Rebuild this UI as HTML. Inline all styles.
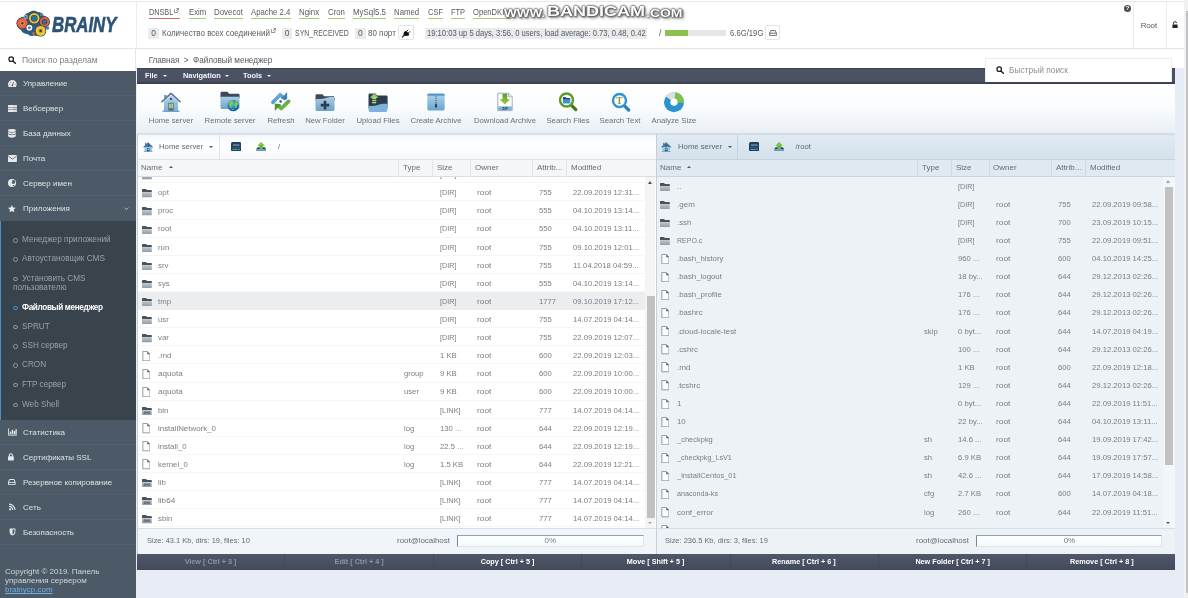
<!DOCTYPE html>
<html lang="ru">
<head>
<meta charset="utf-8">
<title>BrainyCP - Файловый менеджер</title>
<style>
*{box-sizing:border-box;margin:0;padding:0}
html,body{width:1188px;height:598px;overflow:hidden}
body{position:relative;background:#e8edf5;font-family:"Liberation Sans",sans-serif;font-size:8px;color:#5d646b}
#root{position:absolute;left:0;top:0;width:1188px;height:598px;will-change:transform}
.abs{position:absolute}
i{font-style:normal}
/* ---------- header ---------- */
#hdr{position:absolute;left:0;top:0;width:1184px;height:48.800px;background:#fff;border-bottom:1px solid #e2e4e7}
#hdr:before{content:"";position:absolute;left:0;top:1px;width:100%;height:1px;background:#e6e7e9}
#hdr .vline{position:absolute;top:2px;width:1px;height:46px;background:#eaecee}
#logo{position:absolute;left:0;top:0;width:136px;height:49px}
.svc{position:absolute;top:8px;height:10.700px;font-size:8.600px;color:#555b62;line-height:9px;border-bottom:1.200px solid #a3d070;white-space:nowrap}
.svc i,.st i{display:inline-block;transform-origin:0 50%}
.svc.red{border-bottom-color:#d2706c}
.st{position:absolute;top:28.300px;height:11px;line-height:11px;font-size:8.600px;color:#555b62;white-space:nowrap}
.bdg{position:absolute;top:28.200px;background:#e9ebed;width:10.600px;height:10.600px;line-height:10.800px;font-size:8.400px;text-align:center;color:#555}
/* ---------- sidebar ---------- */
#side{position:absolute;left:0;top:49px;width:136px;height:549px;background:#4b5a66}
#ssearch{position:absolute;left:0;top:0;width:136px;height:22px;background:#fff;border-right:1px solid #e4e6e8}
#ssearch span{position:absolute;left:22px;top:6px;font-size:8.5px;line-height:10px;color:#7b8187}
.mi{position:absolute;left:0;width:136px;height:25px;border-bottom:1px solid #536170;color:#dde1e5;font-size:8px;line-height:25px;padding-left:23px;white-space:nowrap}
.mi svg{position:absolute;left:8px;top:8px;width:9px;height:8px}
#sub{position:absolute;left:0;top:171.500px;width:136px;height:199.100px;background:#38434c;border-left:1.5px solid #4a90c8}
.si{position:absolute;left:22px;font-size:8.200px;line-height:9.700px;color:#98a2a9;white-space:nowrap}
.si:before{content:"";position:absolute;left:-9px;top:3px;width:2.5px;height:2.5px;border:1px solid #8e989f;border-radius:50%}
.si.act{color:#fff;font-weight:bold;letter-spacing:-.35px}
.si.act:before{border-color:#4a90c8}
#foot{position:absolute;left:5px;top:517.500px;font-size:8px;line-height:9.400px;color:#d0d5da}
#foot u{color:#6fb1e6}
/* ---------- main ---------- */
#crumb{position:absolute;left:136px;top:49px;width:1048px;height:19px;background:#fff}
#crumb span{position:absolute;left:12.700px;top:7.100px;font-size:8.200px;letter-spacing:-.06px;line-height:10px;color:#555b61;white-space:nowrap}
#mbar{position:absolute;left:136.800px;top:68px;width:1038.500px;height:15.800px;background:linear-gradient(#3a4150,#4a5263 12%,#4a5162 80%,#363c4a);color:#f4f6f9;font-size:7.700px;line-height:15.600px;font-weight:bold;overflow:hidden}
#mbar span{position:absolute;top:0;white-space:nowrap}
#mbar span b{display:inline-block;transform:scaleX(.96);transform-origin:0 50%}
.car{display:inline-block;width:0;height:0;border-left:2.100px solid transparent;border-right:2.100px solid transparent;border-top:2.600px solid currentColor;vertical-align:middle;margin-left:3px}
#tbar{position:absolute;left:137px;top:83.800px;width:1037.600px;height:50.500px;background:linear-gradient(#ffffff 0%,#fbfcfd 45%,#e9eff5 100%);border-bottom:1px solid #d5dde5}
.tb{position:absolute;top:0;height:50px;text-align:center;white-space:nowrap}
.tb svg{position:absolute;left:50%;top:7.200px;width:22px;height:22px;margin-left:-11px}
.tb span{position:absolute;left:50%;top:32.500px;font-size:7.700px;line-height:10px;color:#686f77;transform:translateX(-50%) scaleX(1.010)}
#qs{position:absolute;left:985px;top:58.200px;width:186.600px;height:23.800px;background:#fff;border:1px solid #ededed;border-bottom:none}
#qs span{position:absolute;left:23px;top:6.300px;font-size:8.400px;line-height:10px;color:#8a9096}
/* panels */
.pnl{position:absolute;top:134.300px;height:419.700px;overflow:hidden}
#pl{left:137px;width:518.500px;background:#fff}
#pr{left:655.500px;width:519.100px;background:#edf2f7}
.lb{position:absolute;left:0;top:0;width:1px;height:100%;background:#c9ced3;z-index:5}
#pr .lb{background:#c5d0da}
.pbar{position:absolute;left:0;top:0;width:100%;height:25.700px;background:linear-gradient(#f4f7fa,#ffffff 40%,#f6f8fa);border-top:1px solid #dbe2e9;border-bottom:1px solid #dde2e7}
#pr .pbar{background:linear-gradient(#e1eaf2,#d4e1eb);border-top-color:#d0dbe4;border-bottom-color:#c6d3dd}
.pbar .t{position:absolute;top:7.200px;font-size:7.700px;line-height:10px;color:#5f6871;white-space:nowrap}
.pbar .t i{display:inline-block;transform:scaleX(1.005);transform-origin:0 50%}
.pbar .sep{position:absolute;left:81.500px;top:0;width:1px;height:25px;background:#dfe5ea}
#pr .pbar .sep{background:#c6d3de}
.chdr{position:absolute;left:0;top:25.700px;width:100%;height:17px;background:#f4f6f8;border-bottom:1px solid #d9dee3}
#pr .chdr{background:#dfe9f1;border-bottom-color:#c9d4dd}
.chdr span{position:absolute;top:3.500px;font-size:7.700px;line-height:10px;color:#646c75;white-space:nowrap}
.chdr span i{display:inline-block;transform:scaleX(1.040);transform-origin:0 50%}
.chdr b{position:absolute;top:0;width:1px;height:17px;background:#e3e6ea}
#pr .chdr b{background:#d0dbe4}
.list{position:absolute;left:0;top:42.700px;width:507.800px;height:351px;overflow:hidden}
#pr .list{width:508px}
.row{position:absolute;left:0;width:100%;height:18.110px;border-bottom:1px solid #f5f6f7}
#pr .row{border-bottom-color:transparent}
.row.sel{background:#ebedef;border-bottom-color:#ebedef}
.ic{position:absolute;left:4.800px;top:6px;width:9.800px;height:8.300px}
.ic.f{left:5.100px;top:4.500px;width:8.400px;height:10.300px}
.c{position:absolute;top:4.900px;font-size:7.800px;line-height:10px;color:#777e86;white-space:nowrap}
.c i{display:inline-block;transform:scaleX(.985);transform-origin:0 50%}
.c.n i{transform:scaleX(1.010)}
.sb{position:absolute;top:42.700px;width:11px;height:351px;background:#f4f4f4}
.sb .th{position:absolute;left:2.300px;width:7.600px;background:#c1c1c1}
.sbar{position:absolute;left:0;top:393.700px;width:100%;height:26px;background:#f1f4f8;border-top:1px solid #d9dee4}
#pr .sbar{background:#edf2f7}
.sbar span{position:absolute;top:6.900px;font-size:7.700px;line-height:10px;color:#646c75;white-space:nowrap}
.sbar span i{display:inline-block;transform:scaleX(.97);transform-origin:0 50%}
.prog{position:absolute;top:6.300px;height:11.300px;background:#fff;border:1px solid #dbe6ee;border-top-color:#86a5ba;border-left:1.500px solid #6c8aa0;background:linear-gradient(#fff,#f4fafc);font-size:8px;line-height:9.500px;text-align:center;color:#777}
#bbar{position:absolute;left:137px;top:554px;width:1037.600px;height:15.500px;background:linear-gradient(#4f576a,#434a5a)}
#bbar span{position:absolute;top:0;width:148.4px;height:15.5px;text-align:center;color:#fff;font-weight:bold;font-size:7.700px;line-height:15.800px;border-right:1px solid #424a59;white-space:nowrap}
#bbar span.dis{color:#8d94a2}
#bbar span i{display:inline-block;transform:scaleX(.94)}
#pscroll{position:absolute;left:1184.300px;top:0;width:3.700px;height:598px;background:#f1f1f2}
#pscroll:after{content:"";position:absolute;left:1.700px;top:10.500px;width:2px;height:582.300px;background:#c1c1c3}
#wm{position:absolute;left:504.300px;top:2.500px;width:190px;height:20px;font-weight:bold;color:#fff;white-space:nowrap;text-shadow:0 0 1.500px #444,0 0 1.500px #444,0 0 2px #555,.8px .8px 2px #666,1.500px 1.500px 3px rgba(0,0,0,.4)}
#wm span{position:absolute;line-height:16px;transform-origin:0 50%}
</style>
</head>
<body>
<div id="root">

<!-- header -->
<div id="hdr">
  <div class="vline" style="left:135.5px"></div>
  <div class="vline" style="left:1133px"></div>
  <div class="vline" style="left:1166px"></div>
  <svg id="logo" viewBox="0 0 136 49">
    <g>
      <path d="M17 24c0-4 3-7 6.500-7 1-2.500 3-4 5.500-4.500 2-2 6-2.500 8.500-.5 3 0 5.500 1.500 6.500 4 3 .5 5.500 3 5.500 6 0 2.500-1.500 4.500-3.500 5.500 0 3-2 5.500-5 6-1.500 2-4.500 3-7 2-2 1-5 .5-6.500-1.500-3 0-5.500-1.500-6.500-4C18.500 29 17 26.500 17 24z" fill="#2b5d84"/>
      <circle cx="22.400" cy="23.300" r="6" fill="#3a3f45"/><circle cx="22.400" cy="23.300" r="5.300" fill="#e8633a"/><circle cx="22.400" cy="23.300" r="2.400" fill="#f08a5e"/><circle cx="22.400" cy="23.300" r="1.200" fill="#3a3f45"/>
      <circle cx="34.200" cy="18.300" r="6" fill="#3a3f45"/><circle cx="34.200" cy="18.300" r="5.300" fill="#e9c83a"/><circle cx="34.200" cy="18.300" r="3.400" fill="#3a3f45"/><circle cx="34.200" cy="18.300" r="2.800" fill="#2f6fa3"/>
      <circle cx="44.500" cy="21.800" r="5.500" fill="#3a3f45"/><circle cx="44.500" cy="21.800" r="4.800" fill="#e8633a"/><circle cx="44.500" cy="21.800" r="2.800" fill="#3a3f45"/><circle cx="44.500" cy="21.800" r="2.200" fill="#2f6fa3"/>
      <circle cx="40.600" cy="30.900" r="5.700" fill="#3a3f45"/><circle cx="40.600" cy="30.900" r="5" fill="#e9c83a"/><circle cx="40.600" cy="30.900" r="2.300" fill="#d4ad20"/><circle cx="40.600" cy="30.900" r="1.300" fill="#3a3f45"/>
      <circle cx="29.400" cy="27.700" r="3.600" fill="#3a3f45"/><circle cx="29.400" cy="27.700" r="3" fill="#f4f6f8"/><circle cx="29.400" cy="27.700" r="1.300" fill="#2f6fa3"/>
      <circle cx="25.700" cy="17" r="2.200" fill="#8fb3cc"/><circle cx="25.700" cy="17" r="1" fill="#2b5d84"/>
      <circle cx="41.500" cy="14.800" r="1.500" fill="#3f8cc0"/><circle cx="47.500" cy="28" r="1.800" fill="#3f8cc0"/><circle cx="33.500" cy="33.500" r="1.300" fill="#e8633a"/>
    </g>
    <text x="52" y="32.400" font-family="Liberation Sans, sans-serif" font-size="22" font-weight="bold" font-style="italic" fill="#2d5378" stroke="#2d5378" stroke-width=".6" textLength="64.500" lengthAdjust="spacingAndGlyphs">BRAINY</text>
  </svg>

<span class="svc red" style="left:148.7px;width:31.1px"><i style="transform:scaleX(0.847)">DNSBL</i><span style="position:absolute;left:24.6px;top:-1px"><svg viewBox="0 0 6 6" style="display:inline-block;width:5px;height:5px;vertical-align:top;margin-left:1px;margin-top:1px"><path d="M.5 1.500v4h4V3.500M3 .5h2.500V3M5.300 .7L2.500 3.500" fill="none" stroke="#50565c" stroke-width=".8"/></svg></span></span>
<span class="svc" style="left:188.6px;width:17.2px"><i style="transform:scaleX(0.900)">Exim</i></span>
<span class="svc" style="left:214px;width:28.9px"><i style="transform:scaleX(0.916)">Dovecot</i></span>
<span class="svc" style="left:251.2px;width:39.4px"><i style="transform:scaleX(0.906)">Apache 2.4</i></span>
<span class="svc" style="left:298.7px;width:20.2px"><i style="transform:scaleX(0.919)">Nginx</i></span>
<span class="svc" style="left:327.7px;width:16.9px"><i style="transform:scaleX(0.907)">Cron</i></span>
<span class="svc" style="left:352.7px;width:32.9px"><i style="transform:scaleX(0.918)">MySql5.5</i></span>
<span class="svc" style="left:393.9px;width:25.2px"><i style="transform:scaleX(0.909)">Named</i></span>
<span class="svc" style="left:428px;width:15.0px"><i style="transform:scaleX(0.872)">CSF</i></span>
<span class="svc" style="left:450.5px;width:14.1px"><i style="transform:scaleX(0.868)">FTP</i></span>
<span class="svc" style="left:473.4px;width:37.6px"><i style="transform:scaleX(0.884)">OpenDKIM</i></span>
<span class="bdg" style="left:148.200px">0</span>
<span class="st" style="left:161.6px"><i style="transform:scaleX(0.930)">Количество всех соединений</i><span style="position:absolute;left:108.3px;top:-1px"><svg viewBox="0 0 6 6" style="display:inline-block;width:5px;height:5px;vertical-align:top;margin-left:1px;margin-top:1px"><path d="M.5 1.500v4h4V3.500M3 .5h2.500V3M5.300 .7L2.500 3.500" fill="none" stroke="#50565c" stroke-width=".8"/></svg></span></span>
<span class="bdg" style="left:281.800px">0</span>
<span class="st" style="left:295.4px"><i style="transform:scaleX(0.810)">SYN_RECEIVED</i></span>
<span class="bdg" style="left:355px">0</span>
<span class="st" style="left:367.9px"><i style="transform:scaleX(0.929)">80 порт</i></span>
<div class="abs" style="left:398.200px;top:25.200px;width:15.500px;height:15.300px;border:1px solid #e1e3e6;border-radius:2px;background:#fff">
    <svg viewBox="0 0 15.500 15.300" style="position:absolute;left:-1px;top:-1px;width:15.500px;height:15.300px"><g transform="translate(1.100,1.700) scale(.88)"><path d="M3.700 11.900L6.200 9.400" stroke="#111" stroke-width="1.300" stroke-linecap="round"/><path d="M5.500 7.100l3.200 3.200c1.400.4 2.800-.5 2.800-2.100L8.300 5c-1.700 0-3 .9-2.800 2.100z" fill="#111"/><circle cx="7.300" cy="8.300" r="2.400" fill="#111"/><path d="M8.600 5.300L10.100 3.800M10.500 7.200L12 5.700" stroke="#111" stroke-width="1.100" stroke-linecap="round"/></g></svg>
  </div>
<div class="abs" style="left:425.300px;top:28.200px;width:222.200px;height:10.600px;background:#e9ebed"></div>
<span class="st" style="left:427px"><i style="transform:scaleX(0.887)">19:10:03 up 5 days, 3:56, 0 users, load average: 0.73, 0.48, 0.42</i></span>
<span class="st" style="left:659px"><i>/</i></span>
<div class="abs" style="left:665px;top:30.300px;width:61px;height:6px;background:#e4e6e8"><div style="width:23px;height:6px;background:#8cc152"></div></div>
<span class="st" style="left:729.8px"><i style="transform:scaleX(0.896)">6.6G/19G</i></span>
  <div class="abs" style="left:765.300px;top:25.300px;width:14.500px;height:15px;border:1px solid #e1e3e6;border-radius:1.500px;background:#fff">
    <svg viewBox="0 0 10 8" style="position:absolute;left:3px;top:4px;width:8px;height:6px"><path d="M2 .7h6l1.500 3.500v3h-9v-3z" fill="none" stroke="#444" stroke-width="1"/><path d="M.5 4.200h9" stroke="#444" stroke-width="1"/></svg>
  </div>

  <div class="abs" style="left:1123.900px;top:5px;width:7.400px;height:7.400px;border-radius:50%;background:#4a4f55;color:#fff;font-size:6px;line-height:7.400px;text-align:center;font-weight:bold">?</div>
  <span class="abs" style="left:1140.700px;top:20.600px;font-size:8px;line-height:10px;color:#555b61;letter-spacing:-.15px">Root</span>
  <svg class="abs" viewBox="0 0 8 10" style="left:1172px;top:20.600px;width:6px;height:7.500px"><rect x=".5" y="4.500" width="7" height="5" rx=".8" fill="#222"/><path d="M2 4.500V2.800a2 2 0 0 1 4 0" fill="none" stroke="#222" stroke-width="1.200"/></svg>
</div>
<div id="wm"><span style="left:0;top:2.400px;font-size:10.500px;transform:scaleX(1.290);text-transform:uppercase">www.</span><span style="left:42.300px;top:0;font-size:15.400px;transform:scaleX(1.170)">BANDICAM</span><span style="left:141.500px;top:2.400px;font-size:10.500px;transform:scaleX(1.330);text-transform:uppercase">.com</span></div>

<!-- sidebar -->
<div id="side">
  <div id="ssearch">
    <svg viewBox="0 0 10 10" style="position:absolute;left:8px;top:7px;width:8px;height:8px"><circle cx="4" cy="4" r="2.800" fill="none" stroke="#222" stroke-width="1.600"/><path d="M6.200 6.200L9.200 9.200" stroke="#222" stroke-width="1.800" stroke-linecap="round"/></svg>
    <span>Поиск по разделам</span>
  </div>
  <div class="mi" style="top:22.10px"><svg viewBox="0 0 8.700 7.100" style="left:8px;top:8.900px;width:8.700px;height:7.100px"><path d="M4.350 0A4.350 4.350 0 0 0 0 4.350c0 1 .3 1.950.85 2.750h7c.55-.8.850-1.750.850-2.750A4.350 4.350 0 0 0 4.350 0z" fill="#e6eaed"/><path d="M4.350 5.200L5.700 1.900" stroke="#4b5a66" stroke-width=".8"/><circle cx="4.350" cy="5.300" r=".9" fill="#4b5a66"/><circle cx="1.500" cy="4.300" r=".45" fill="#4b5a66"/><circle cx="2.400" cy="2.200" r=".45" fill="#4b5a66"/><circle cx="7.200" cy="4.300" r=".45" fill="#4b5a66"/></svg>Управление</div>
  <div class="mi" style="top:47.15px"><svg viewBox="0 0 8.900 7" style="left:7.800px;top:8.400px;width:8.900px;height:7px"><rect x="0" y="0" width="8.900" height="2" rx=".3" fill="#e6eaed"/><rect x="0" y="2.500" width="8.900" height="2" rx=".3" fill="#e6eaed"/><rect x="0" y="5" width="8.900" height="2" rx=".3" fill="#e6eaed"/><rect x="5.200" y=".7" width="2.800" height=".5" fill="#9aa5ae"/><rect x="5.200" y="3.200" width="2.800" height=".5" fill="#9aa5ae"/><rect x="5.200" y="5.700" width="2.800" height=".5" fill="#9aa5ae"/></svg>Вебсервер</div>
  <div class="mi" style="top:72.20px"><svg viewBox="0 0 7.800 8.700" style="left:8px;top:7.700px;width:7.800px;height:8.700px"><ellipse cx="3.900" cy="1.500" rx="3.900" ry="1.500" fill="#e6eaed"/><path d="M0 2.500c.7.800 2.200 1.200 3.900 1.200s3.200-.4 3.900-1.200v1.700c-.7.800-2.200 1.200-3.900 1.200S.7 5 0 4.200zM0 5.100c.7.800 2.200 1.200 3.900 1.200s3.200-.4 3.900-1.200v1.900c-.5 1.100-2.200 1.700-3.900 1.700S.5 8.100 0 7z" fill="#e6eaed"/></svg>База данных</div>
  <div class="mi" style="top:97.25px"><svg viewBox="0 0 8.900 7.100" style="left:7.800px;top:8.800px;width:8.900px;height:7.100px"><rect x="0" y="0" width="8.900" height="7.100" rx=".8" fill="#e6eaed"/><path d="M.4 1.200L4.450 4.200l4.050-3" fill="none" stroke="#4b5a66" stroke-width=".8"/></svg>Почта</div>
  <div class="mi" style="top:122.30px"><svg viewBox="0 0 8 8" style="left:7.800px;top:8.200px;width:8px;height:8px"><circle cx="4" cy="4" r="4" fill="#e6eaed"/><path d="M4.300 1c1.300-.3 2.500.4 3 1.300-.5.500-.6 1-.3 1.600-.5.700-1.300.5-1.600 1.200-.6-.3-1.500-.5-1.700-1.300-.2-.8.700-1 .8-1.600.1-.5-.4-.7-.2-1.200zM5 6c.6-.2 1.200 0 1.600.3-.5.600-1.100 1-1.800 1.200-.2-.5-.2-1.100.2-1.500z" fill="#4b5a66"/></svg>Сервер имен</div>
  <div class="mi" style="top:147.300px;border-bottom:none"><svg viewBox="0 0 7.700 7.300" style="left:8.300px;top:8.600px;width:7.700px;height:7.300px"><path d="M3.850 0l1.150 2.500 2.700.3-2 1.850.55 2.650-2.400-1.350L1.450 7.300 2 4.650 0 2.800l2.700-.3z" fill="#e6eaed"/></svg>Приложения<svg viewBox="0 0 6 4" style="left:124px;top:11px;width:5px;height:3.5px"><path d="M.7.7L3 3l2.300-2.300" fill="none" stroke="#c8ced3" stroke-width="1"/></svg></div>
  <div id="sub">
    <div class="si" style="top:14.65px;left:21px">Менеджер приложений</div>
    <div class="si" style="top:33.95px;left:21px">Автоустановщик CMS</div>
    <div class="si" style="top:53.25px;left:21px">Установить CMS<br><span style="margin-left:-9px">пользователю</span></div>
    <div class="si act" style="top:82.05px;left:21px">Файловый менеджер</div>
    <div class="si" style="top:101.35px;left:21px">SPRUT</div>
    <div class="si" style="top:120.65px;left:21px">SSH сервер</div>
    <div class="si" style="top:139.95px;left:21px">CRON</div>
    <div class="si" style="top:159.25px;left:21px">FTP сервер</div>
    <div class="si" style="top:179.45px;left:21px">Web Shell</div>
  </div>
  <div class="mi" style="top:370.6px"><svg viewBox="0 0 10 8"><path d="M.5 0v7.500h9.500" fill="none" stroke="#e6eaed" stroke-width="1"/><rect x="2" y="3.500" width="1.500" height="3" fill="#e6eaed"/><rect x="4.200" y="1.500" width="1.500" height="5" fill="#e6eaed"/><rect x="6.400" y="2.800" width="1.500" height="3.700" fill="#e6eaed"/><rect x="8.300" y=".8" width="1.400" height="5.700" fill="#e6eaed"/></svg>Статистика</div>
  <div class="mi" style="top:395.7px"><svg viewBox="0 0 5.800 7.600" style="left:8.300px;top:8.600px;width:5.800px;height:7.600px"><rect x="0" y="3.300" width="5.800" height="4.300" rx=".6" fill="#e6eaed"/><path d="M1.300 3.500V2.300a1.600 1.600 0 0 1 3.200 0v1.200" fill="none" stroke="#e6eaed" stroke-width="1.100"/></svg>Сертификаты SSL</div>
  <div class="mi" style="top:420.8px"><svg viewBox="0 0 7.600 6.200" style="left:8.200px;top:9.200px;width:7.600px;height:6.200px"><path d="M1.500.5h4.600l1 2.800v2.400H.5V3.300z" fill="none" stroke="#e6eaed" stroke-width="1"/><path d="M.5 3.400h6.600" stroke="#e6eaed" stroke-width=".9"/></svg>Резервное копирование</div>
  <div class="mi" style="top:445.9px"><svg viewBox="0 0 10 8"><circle cx="2.300" cy="6.600" r="1.200" fill="#e6eaed"/><path d="M1.200 3.300a4 4 0 0 1 4 4M1.200.8a6.500 6.500 0 0 1 6.500 6.500" fill="none" stroke="#e6eaed" stroke-width="1.200"/></svg>Сеть</div>
  <div class="mi" style="top:471.0px"><svg viewBox="0 0 10 8"><path d="M1.800.2h6.400v3.800c0 2-1.600 3.300-3.200 4-1.600-.7-3.200-2-3.200-4z" fill="#e6eaed"/><path d="M5 1.200v5.600c1.200-.6 2.200-1.500 2.200-2.800V1.200z" fill="#4e5b67"/></svg>Безопасность</div>
  <div id="foot">Copyright © 2019. Панель<br>управления сервером<br><u>brainycp.com</u></div>
</div>

<!-- main -->
<div id="crumb"><span>Главная &nbsp;&gt;&nbsp; Файловый менеджер</span></div>
<div id="mbar">
  <span style="left:8px"><b>File</b></span><em class="car" style="position:absolute;left:26.200px;top:7.300px;margin:0"></em>
  <span style="left:46px"><b>Navigation</b></span><em class="car" style="position:absolute;left:88.600px;top:7.300px;margin:0"></em>
  <span style="left:106.400px"><b>Tools</b></span><em class="car" style="position:absolute;left:130.200px;top:7.300px;margin:0"></em>
</div>
<div id="tbar">
<div class="tb" style="left:-5.7px;width:80px"><svg viewBox="0 0 22 22"><defs><linearGradient id="hb" x1="0" y1="0" x2="0" y2="1"><stop offset="0" stop-color="#b5d5ea"/><stop offset="1" stop-color="#7fb0d3"/></linearGradient></defs>
<rect x="4.300" y="4" width="2.200" height="4" fill="#6d8aa3"/>
<path d="M4 10.500L11 4.200l7 6.300V20H4z" fill="url(#hb)"/>
<path d="M1.500 11.200L11 2.300l9.500 8.900" fill="none" stroke="#5e7f9b" stroke-width="1.700" stroke-linejoin="round"/>
<circle cx="11" cy="8" r="1.100" fill="#27384a"/>
<rect x="8.300" y="11.800" width="5.400" height="8.200" fill="#5b6c7c"/>
<rect x="9.200" y="12.600" width="1.500" height="4.600" fill="#c8dc8c"/><rect x="11.400" y="12.600" width="1.500" height="4.600" fill="#c8dc8c"/>
<rect x="2.500" y="19.600" width="17" height="1.400" fill="#6fa3c9"/></svg><span>Home server</span></div>
<div class="tb" style="left:53.4px;width:80px"><svg viewBox="0 0 22 22"><defs><linearGradient id="fb" x1="0" y1="0" x2="0" y2="1"><stop offset="0" stop-color="#a9cde6"/><stop offset="1" stop-color="#6fa2c8"/></linearGradient><radialGradient id="gl" cx=".4" cy=".35" r=".7"><stop offset="0" stop-color="#58b6f0"/><stop offset="1" stop-color="#0d4f9e"/></radialGradient></defs>
<g transform="translate(0,-.9)"><path d="M1.500 3.200c0-.9.600-1.500 1.500-1.500h5.500l1.600 2h9c.9 0 1.500.6 1.500 1.500v3H1.500z" fill="#3d4a5e"/>
<path d="M1.500 6.600h19v10.900c0 .9-.6 1.500-1.500 1.500H3c-.9 0-1.500-.6-1.500-1.500z" fill="url(#fb)"/>
<circle cx="14.200" cy="15.500" r="5.700" fill="url(#gl)"/>
<path d="M10.200 12.200c1-1.200 2.600-1.900 3.700-1.600.3.800-.5 1.200-.3 2 .8.300 1.400 1 .8 1.800-.7.500-1.600.2-2 .9-.3.800.6 1.500.2 2.400-.5.300-1.200-.3-1.700-1.200-.8-1.400-1.200-3-.7-4.300zM16 10.600c1.400.5 2.600 1.600 3.200 3-.1.900-.7 1-1 1.800-.2.900-.3 1.900-1.200 2.500-.8.200-1-.7-.9-1.500.1-1-.9-1.300-.8-2.300.1-.8 1-1 1-1.800 0-.6-.5-1-.3-1.700z" fill="#7ccf4a"/><path d="M12.500 19.300c.8-.5 1.800-.4 2.500.2-.8.400-1.700.3-2.500-.2z" fill="#7ccf4a"/></g></svg><span>Remote server</span></div>
<div class="tb" style="left:104.4px;width:80px"><svg viewBox="0 0 22 22"><defs><linearGradient id="rb" x1="0" y1="0" x2="1" y2="1"><stop offset="0" stop-color="#7ab4e0"/><stop offset="1" stop-color="#3f86c2"/></linearGradient><linearGradient id="rg" x1="0" y1="0" x2="1" y2="1"><stop offset="0" stop-color="#4f9a3a"/><stop offset="1" stop-color="#7cc04f"/></linearGradient></defs>
<path d="M2.900 11.300L10.200 3.800l4.300 3.600" fill="none" stroke="url(#rb)" stroke-width="3.700" stroke-linecap="round" stroke-linejoin="round"/>
<path d="M17.100 1v7.300l-6-.3z" fill="#3f7fb8"/>
<path d="M18.600 10.400L11.400 17.500l-3.300-2.900" fill="none" stroke="url(#rg)" stroke-width="3.700" stroke-linecap="round" stroke-linejoin="round"/>
<path d="M4.800 12.600v7.300l6.300-6.600z" fill="#4c9438"/>
<circle cx="10.600" cy="10.400" r="1.250" fill="#1f5f8f"/></svg><span>Refresh</span></div>
<div class="tb" style="left:148.4px;width:80px"><svg viewBox="0 0 22 22">
<path d="M1.500 4.800c0-.9.600-1.500 1.500-1.500h5.500l1.600 2h9c.9 0 1.500.6 1.500 1.500v3H1.500z" fill="#3d4a5e"/>
<path d="M1.500 8.200c6-.2 8-.2 11-1.400 2-.8 5-1 8-.8v12.500c0 .9-.6 1.500-1.500 1.500H3c-.9 0-1.500-.6-1.500-1.500z" fill="url(#fb)"/>
<path d="M9.700 9.800h2.600v3h3v2.600h-3v3H9.700v-3h-3v-2.600h3z" fill="#2e3b4e"/></svg><span>New Folder</span></div>
<div class="tb" style="left:201.4px;width:80px"><svg viewBox="0 0 22 22"><defs><linearGradient id="ug" x1="0" y1="0" x2="0" y2="1"><stop offset="0" stop-color="#6fc04a"/><stop offset="1" stop-color="#b5dc7c"/></linearGradient></defs>
<path d="M1.500 4c0-.9.600-1.500 1.500-1.500h5.500l1.600 2h9c.9 0 1.500.6 1.500 1.500v11H1.500z" fill="#2f3b4f"/>
<path d="M1 15.200c6-.2 8-.4 11-1.600 2-.8 5-1 9-.6l-.7 6.500c-.1.900-.7 1.500-1.600 1.500H3.300c-.9 0-1.500-.6-1.600-1.500z" fill="#7db3d8"/>
<path d="M7.200 2L11.400 6.800H9.200v1.400H5.200V6.800H3z" fill="url(#ug)"/><rect x="5.200" y="9" width="4" height="1.300" fill="#9fd36a"/><rect x="5.200" y="11" width="4" height="1.300" fill="#b5dc7c"/></svg><span>Upload Files</span></div>
<div class="tb" style="left:259.4px;width:80px"><svg viewBox="0 0 22 22"><defs><linearGradient id="ab" x1="0" y1="0" x2="0" y2="1"><stop offset="0" stop-color="#5f9fcf"/><stop offset=".15" stop-color="#a4cde9"/><stop offset="1" stop-color="#6aa5d0"/></linearGradient></defs>
<rect x="2.300" y="2.800" width="17.400" height="16.700" rx="1.800" fill="url(#ab)"/>
<rect x="2.300" y="2.800" width="17.400" height="1.800" rx=".9" fill="#4f8fc2"/>
<path d="M11 4.800v9" stroke="#3f4f62" stroke-width=".9" stroke-dasharray="1.300 .8"/>
<path d="M10.300 12.800h1.400l.5 3.800h-2.400z" fill="#2f3d4e"/></svg><span>Create Archive</span></div>
<div class="tb" style="left:327.6px;width:80px"><svg viewBox="0 0 22 22"><defs><linearGradient id="dg" x1="0" y1="0" x2="0" y2="1"><stop offset="0" stop-color="#5e9a2a"/><stop offset="1" stop-color="#9ccc3c"/></linearGradient></defs>
<path d="M3.800 2.200h10.800l3.600 3.600v13.800H3.800z" fill="#fff" stroke="#7f9ab3" stroke-width=".8"/>
<path d="M14.600 2.200v3.600h3.600" fill="#dfe8ef" stroke="#7f9ab3" stroke-width=".6"/>
<path d="M8.500 2.800h4.800v5.400h2.800L10.900 13.600 5.600 8.200h2.900z" fill="url(#dg)"/>
<rect x="4.200" y="15.400" width="13.600" height="3.800" fill="#7fb0d8"/>
<text x="11" y="18.600" text-anchor="middle" font-family="Liberation Sans, sans-serif" font-weight="bold" font-size="3.600" fill="#23364a">ZIP</text></svg><span>Download Archive</span></div>
<div class="tb" style="left:391.0px;width:80px"><svg viewBox="0 0 22 22">
<path d="M14.500 14.300l4.300 4.300" stroke="#3f7a1f" stroke-width="3.200" stroke-linecap="round"/>
<circle cx="9.500" cy="9" r="6.500" fill="#fff" stroke="#5b9a2b" stroke-width="2.400"/>
<path d="M5.900 6.800c0-.4.300-.7.700-.7h1.900l.7.900h3.400c.4 0 .7.300.7.700v4c0 .4-.3.700-.7.700H6.600c-.4 0-.7-.3-.7-.7z" fill="#3f8fd6"/><path d="M5.900 6.800c0-.4.300-.7.700-.7h1.900l.7.900h3.400c.4 0 .7.300.7.700v.600H5.900z" fill="#2b4a6e"/></svg><span>Search Files</span></div>
<div class="tb" style="left:443.0px;width:80px"><svg viewBox="0 0 22 22">
<path d="M15.500 14.800l4.200 4.200" stroke="#2a7fbe" stroke-width="3.200" stroke-linecap="round"/>
<circle cx="10.500" cy="9.500" r="6.500" fill="#fff" stroke="#2f92d4" stroke-width="2.400"/>
<text x="10.500" y="13" text-anchor="middle" font-family="Liberation Serif, serif" font-weight="bold" font-size="9.500" fill="#8a9a2a">T</text></svg><span>Search Text</span></div>
<div class="tb" style="left:496.5px;width:80px"><svg viewBox="0 0 22 22">
<circle cx="11" cy="11.200" r="10" fill="#2b93d1"/>
<path d="M11 11.200L2.810 5.460A10 10 0 0 1 12.740 1.350z" fill="#dcdfe2"/>
<path d="M11 11.200L12.740 1.350A10 10 0 0 1 20.960 12.070z" fill="#7fc04a"/>
<circle cx="11" cy="11.200" r="3.600" fill="#fff"/></svg><span>Analyze Size</span></div>
</div>
<div id="qs">
  <svg viewBox="0 0 10 10" style="position:absolute;left:9.500px;top:7px;width:8px;height:8px"><circle cx="4" cy="4" r="2.800" fill="none" stroke="#222" stroke-width="1.600"/><path d="M6.200 6.200L9.200 9.200" stroke="#222" stroke-width="1.800" stroke-linecap="round"/></svg>
  <span>Быстрый поиск</span>
</div>

<div class="pnl" id="pl"><div class="lb"></div>
  <div class="pbar">
    <svg viewBox="0 0 10.400 10" style="position:absolute;left:5.800px;top:6.500px;width:10.400px;height:10px"><rect x="2.200" y=".8" width="1.200" height="2.500" fill="#3f6a94"/><path d="M1.500 5L5.200 1.600 8.900 5V9.500H1.500z" fill="#8fc6e2"/><path d="M0 5.300L5.200 .2l5.200 5.100-1 .3L5.200 3 1 5.600z" fill="#3f6a94"/><path d="M2 3.800L5.200 .9l3.200 2.900-.4 1.200H2.400z" fill="#4a78a3"/><circle cx="5.200" cy="3.200" r=".7" fill="#1f3f63"/><rect x="4" y="6.200" width="2.400" height="3.300" fill="#2d4660"/><rect x="4.500" y="6.700" width="1.400" height="1.100" fill="#cfe6f2"/><rect x=".9" y="9.200" width="8.600" height=".8" fill="#5fa3cf"/></svg>
    <span class="t" style="left:22px"><i>Home server</i><em class="car" style="margin-left:6px;color:#555"></em></span>
    <div class="sep"></div>
    <svg viewBox="0 0 10.400 9.200" style="position:absolute;left:93.8px;top:6.500px;width:10.400px;height:9.200px"><rect x="0" y="0" width="10.400" height="9.200" rx="1.600" fill="#23405f"/><rect x=".5" y="4.600" width="9.400" height="4.200" rx="1.200" fill="#1b3a5e"/><rect x="1.900" y="2.500" width="6.600" height="1.200" fill="#8aa3bb"/><rect x="1" y="5" width="8.400" height=".6" fill="#3f73a8"/><rect x="1.500" y="6.900" width="7.400" height="1" fill="#63b9a6"/><rect x="5.800" y="6.900" width="1.600" height="1" fill="#2f6f4f"/></svg><svg viewBox="0 0 10.400 9.400" style="position:absolute;left:118.6px;top:6.300px;width:10.400px;height:9.400px"><path d="M.2 7.200L1.700 5.300h7L10.200 7.200z" fill="#243a5a"/><path d="M5.100 0l3.700 3.700H6.900v3.200H3.300V3.700H1.400z" fill="#6ab82e"/><path d="M5.100 .9l2 2.200H3.100z" fill="#8fd04a"/><rect x=".2" y="6.900" width="10" height="2.500" rx=".4" fill="#5d93c4"/><rect x=".8" y="7.600" width="8.800" height=".6" fill="#8dbbe0"/></svg>
    <span class="t" style="left:141px">/</span>
  </div>
  <div class="chdr">
    <span style="left:4px"><i>Name</i><em class="car" style="border-top:none;border-bottom:2.600px solid #555;margin-left:7px;margin-top:-2px"></em></span>
    <b style="left:261.100px"></b><span style="left:266px"><i>Type</i></span>
    <b style="left:295px"></b><span style="left:299.600px"><i>Size</i></span>
    <b style="left:332.700px"></b><span style="left:337.500px"><i>Owner</i></span>
    <b style="left:395px"></b><span style="left:399.600px"><i>Attrib...</i></span>
    <b style="left:428.600px"></b><span style="left:433.700px"><i>Modified</i></span>
  </div>
  <div class="list">
<div class="row" style="top:-11.77px"><svg class="ic" viewBox="0 0 10 8.400"><defs><linearGradient id="fg" x1="0" y1="0" x2="0" y2="1"><stop offset="0" stop-color="#c0c7cd"/><stop offset="1" stop-color="#929aa2"/></linearGradient></defs><path d="M0 .5c0-.3.200-.5.500-.5h3.700l.8.900H9.500c.3 0 .5.200.5.500v1.700H0z" fill="#4a535c"/><path d="M0 3.100h10V8.400H0z" fill="url(#fg)"/></svg><span class="c n" style="left:21px"><i style="transform:scaleX(1.000)">mnt</i></span><span class="c" style="left:302.5px"><i style="transform:scaleX(0.923)">[DIR]</i></span><span class="c" style="left:339.8px"><i style="transform:scaleX(1.064)">root</i></span><span class="c" style="left:401.9px"><i style="transform:scaleX(0.985)">755</i></span><span class="c" style="left:436px"><i style="transform:scaleX(0.985)">14.07.2019 04:14...</i></span></div>
<div class="row" style="top:6.34px"><svg class="ic" viewBox="0 0 10 8.400"><defs><linearGradient id="fg" x1="0" y1="0" x2="0" y2="1"><stop offset="0" stop-color="#c0c7cd"/><stop offset="1" stop-color="#929aa2"/></linearGradient></defs><path d="M0 .5c0-.3.200-.5.500-.5h3.700l.8.900H9.500c.3 0 .5.200.5.500v1.700H0z" fill="#4a535c"/><path d="M0 3.100h10V8.400H0z" fill="url(#fg)"/></svg><span class="c n" style="left:21px"><i style="transform:scaleX(1.000)">opt</i></span><span class="c" style="left:302.5px"><i style="transform:scaleX(0.923)">[DIR]</i></span><span class="c" style="left:339.8px"><i style="transform:scaleX(1.064)">root</i></span><span class="c" style="left:401.9px"><i style="transform:scaleX(0.985)">755</i></span><span class="c" style="left:436px"><i style="transform:scaleX(0.985)">22.09.2019 12:31...</i></span></div>
<div class="row" style="top:24.45px"><svg class="ic" viewBox="0 0 10 8.400"><defs><linearGradient id="fg" x1="0" y1="0" x2="0" y2="1"><stop offset="0" stop-color="#c0c7cd"/><stop offset="1" stop-color="#929aa2"/></linearGradient></defs><path d="M0 .5c0-.3.200-.5.500-.5h3.700l.8.900H9.500c.3 0 .5.200.5.500v1.700H0z" fill="#4a535c"/><path d="M0 3.100h10V8.400H0z" fill="url(#fg)"/></svg><span class="c n" style="left:21px"><i style="transform:scaleX(1.000)">proc</i></span><span class="c" style="left:302.5px"><i style="transform:scaleX(0.923)">[DIR]</i></span><span class="c" style="left:339.8px"><i style="transform:scaleX(1.064)">root</i></span><span class="c" style="left:401.9px"><i style="transform:scaleX(0.985)">555</i></span><span class="c" style="left:436px"><i style="transform:scaleX(0.985)">04.10.2019 13:14...</i></span></div>
<div class="row" style="top:42.56px"><svg class="ic" viewBox="0 0 10 8.400"><defs><linearGradient id="fg" x1="0" y1="0" x2="0" y2="1"><stop offset="0" stop-color="#c0c7cd"/><stop offset="1" stop-color="#929aa2"/></linearGradient></defs><path d="M0 .5c0-.3.200-.5.500-.5h3.700l.8.900H9.500c.3 0 .5.200.5.500v1.700H0z" fill="#4a535c"/><path d="M0 3.100h10V8.400H0z" fill="url(#fg)"/></svg><span class="c n" style="left:21px"><i style="transform:scaleX(1.000)">root</i></span><span class="c" style="left:302.5px"><i style="transform:scaleX(0.923)">[DIR]</i></span><span class="c" style="left:339.8px"><i style="transform:scaleX(1.064)">root</i></span><span class="c" style="left:401.9px"><i style="transform:scaleX(0.985)">550</i></span><span class="c" style="left:436px"><i style="transform:scaleX(0.985)">04.10.2019 13:11...</i></span></div>
<div class="row" style="top:60.67px"><svg class="ic" viewBox="0 0 10 8.400"><defs><linearGradient id="fg" x1="0" y1="0" x2="0" y2="1"><stop offset="0" stop-color="#c0c7cd"/><stop offset="1" stop-color="#929aa2"/></linearGradient></defs><path d="M0 .5c0-.3.200-.5.500-.5h3.700l.8.900H9.500c.3 0 .5.200.5.500v1.700H0z" fill="#4a535c"/><path d="M0 3.100h10V8.400H0z" fill="url(#fg)"/></svg><span class="c n" style="left:21px"><i style="transform:scaleX(1.000)">run</i></span><span class="c" style="left:302.5px"><i style="transform:scaleX(0.923)">[DIR]</i></span><span class="c" style="left:339.8px"><i style="transform:scaleX(1.064)">root</i></span><span class="c" style="left:401.9px"><i style="transform:scaleX(0.985)">755</i></span><span class="c" style="left:436px"><i style="transform:scaleX(0.985)">09.10.2019 12:01...</i></span></div>
<div class="row" style="top:78.78px"><svg class="ic" viewBox="0 0 10 8.400"><defs><linearGradient id="fg" x1="0" y1="0" x2="0" y2="1"><stop offset="0" stop-color="#c0c7cd"/><stop offset="1" stop-color="#929aa2"/></linearGradient></defs><path d="M0 .5c0-.3.200-.5.500-.5h3.700l.8.900H9.500c.3 0 .5.200.5.500v1.700H0z" fill="#4a535c"/><path d="M0 3.100h10V8.400H0z" fill="url(#fg)"/></svg><span class="c n" style="left:21px"><i style="transform:scaleX(1.000)">srv</i></span><span class="c" style="left:302.5px"><i style="transform:scaleX(0.923)">[DIR]</i></span><span class="c" style="left:339.8px"><i style="transform:scaleX(1.064)">root</i></span><span class="c" style="left:401.9px"><i style="transform:scaleX(0.985)">755</i></span><span class="c" style="left:436px"><i style="transform:scaleX(0.985)">11.04.2018 04:59...</i></span></div>
<div class="row" style="top:96.89px"><svg class="ic" viewBox="0 0 10 8.400"><defs><linearGradient id="fg" x1="0" y1="0" x2="0" y2="1"><stop offset="0" stop-color="#c0c7cd"/><stop offset="1" stop-color="#929aa2"/></linearGradient></defs><path d="M0 .5c0-.3.200-.5.500-.5h3.700l.8.900H9.500c.3 0 .5.200.5.500v1.700H0z" fill="#4a535c"/><path d="M0 3.100h10V8.400H0z" fill="url(#fg)"/></svg><span class="c n" style="left:21px"><i style="transform:scaleX(1.000)">sys</i></span><span class="c" style="left:302.5px"><i style="transform:scaleX(0.923)">[DIR]</i></span><span class="c" style="left:339.8px"><i style="transform:scaleX(1.064)">root</i></span><span class="c" style="left:401.9px"><i style="transform:scaleX(0.985)">555</i></span><span class="c" style="left:436px"><i style="transform:scaleX(0.985)">04.10.2019 13:14...</i></span></div>
<div class="row sel" style="top:115.00px"><svg class="ic" viewBox="0 0 10 8.400"><defs><linearGradient id="fg" x1="0" y1="0" x2="0" y2="1"><stop offset="0" stop-color="#c0c7cd"/><stop offset="1" stop-color="#929aa2"/></linearGradient></defs><path d="M0 .5c0-.3.200-.5.500-.5h3.700l.8.900H9.500c.3 0 .5.200.5.500v1.700H0z" fill="#4a535c"/><path d="M0 3.100h10V8.400H0z" fill="url(#fg)"/></svg><span class="c n" style="left:21px"><i style="transform:scaleX(1.000)">tmp</i></span><span class="c" style="left:302.5px"><i style="transform:scaleX(0.923)">[DIR]</i></span><span class="c" style="left:339.8px"><i style="transform:scaleX(1.064)">root</i></span><span class="c" style="left:401.9px"><i style="transform:scaleX(0.985)">1777</i></span><span class="c" style="left:436px"><i style="transform:scaleX(0.985)">09.10.2019 17:12...</i></span></div>
<div class="row" style="top:133.11px"><svg class="ic" viewBox="0 0 10 8.400"><defs><linearGradient id="fg" x1="0" y1="0" x2="0" y2="1"><stop offset="0" stop-color="#c0c7cd"/><stop offset="1" stop-color="#929aa2"/></linearGradient></defs><path d="M0 .5c0-.3.200-.5.500-.5h3.700l.8.900H9.500c.3 0 .5.200.5.500v1.700H0z" fill="#4a535c"/><path d="M0 3.100h10V8.400H0z" fill="url(#fg)"/></svg><span class="c n" style="left:21px"><i style="transform:scaleX(1.000)">usr</i></span><span class="c" style="left:302.5px"><i style="transform:scaleX(0.923)">[DIR]</i></span><span class="c" style="left:339.8px"><i style="transform:scaleX(1.064)">root</i></span><span class="c" style="left:401.9px"><i style="transform:scaleX(0.985)">755</i></span><span class="c" style="left:436px"><i style="transform:scaleX(0.985)">14.07.2019 04:14...</i></span></div>
<div class="row" style="top:151.22px"><svg class="ic" viewBox="0 0 10 8.400"><defs><linearGradient id="fg" x1="0" y1="0" x2="0" y2="1"><stop offset="0" stop-color="#c0c7cd"/><stop offset="1" stop-color="#929aa2"/></linearGradient></defs><path d="M0 .5c0-.3.200-.5.500-.5h3.700l.8.900H9.500c.3 0 .5.200.5.500v1.700H0z" fill="#4a535c"/><path d="M0 3.100h10V8.400H0z" fill="url(#fg)"/></svg><span class="c n" style="left:21px"><i style="transform:scaleX(1.000)">var</i></span><span class="c" style="left:302.5px"><i style="transform:scaleX(0.923)">[DIR]</i></span><span class="c" style="left:339.8px"><i style="transform:scaleX(1.064)">root</i></span><span class="c" style="left:401.9px"><i style="transform:scaleX(0.985)">755</i></span><span class="c" style="left:436px"><i style="transform:scaleX(0.985)">22.09.2019 12:07...</i></span></div>
<div class="row" style="top:169.33px"><svg class="ic f" viewBox="0 0 9 11"><path d="M.9.500h4.900l2.700 2.700v7.300H.9z" fill="#fcfdfe" stroke="#70777e" stroke-width=".75"/><path d="M5.600.600v2.800h2.800z" fill="#555b61"/></svg><span class="c n" style="left:21px"><i style="transform:scaleX(1.000)">.rnd</i></span><span class="c" style="left:302.5px"><i style="transform:scaleX(0.985)">1 KB</i></span><span class="c" style="left:339.8px"><i style="transform:scaleX(1.064)">root</i></span><span class="c" style="left:401.9px"><i style="transform:scaleX(0.985)">600</i></span><span class="c" style="left:436px"><i style="transform:scaleX(0.985)">22.09.2019 12:03...</i></span></div>
<div class="row" style="top:187.44px"><svg class="ic f" viewBox="0 0 9 11"><path d="M.9.500h4.900l2.700 2.700v7.300H.9z" fill="#fcfdfe" stroke="#70777e" stroke-width=".75"/><path d="M5.600.600v2.800h2.800z" fill="#555b61"/></svg><span class="c n" style="left:21px"><i style="transform:scaleX(1.035)">aquota</i></span><span class="c" style="left:267px"><i style="transform:scaleX(0.985)">group</i></span><span class="c" style="left:302.5px"><i style="transform:scaleX(0.985)">9 KB</i></span><span class="c" style="left:339.8px"><i style="transform:scaleX(1.064)">root</i></span><span class="c" style="left:401.9px"><i style="transform:scaleX(0.985)">600</i></span><span class="c" style="left:436px"><i style="transform:scaleX(0.985)">22.09.2019 10:00...</i></span></div>
<div class="row" style="top:205.55px"><svg class="ic f" viewBox="0 0 9 11"><path d="M.9.500h4.900l2.700 2.700v7.300H.9z" fill="#fcfdfe" stroke="#70777e" stroke-width=".75"/><path d="M5.600.600v2.800h2.800z" fill="#555b61"/></svg><span class="c n" style="left:21px"><i style="transform:scaleX(1.035)">aquota</i></span><span class="c" style="left:267px"><i style="transform:scaleX(0.985)">user</i></span><span class="c" style="left:302.5px"><i style="transform:scaleX(0.985)">9 KB</i></span><span class="c" style="left:339.8px"><i style="transform:scaleX(1.064)">root</i></span><span class="c" style="left:401.9px"><i style="transform:scaleX(0.985)">600</i></span><span class="c" style="left:436px"><i style="transform:scaleX(0.985)">22.09.2019 10:00...</i></span></div>
<div class="row" style="top:223.66px"><svg class="ic" viewBox="0 0 10 8.400"><path d="M0 .5c0-.3.200-.5.500-.5h3.700l.8.900H9.500c.3 0 .5.200.5.500v1.700H0z" fill="#4a535c"/><path d="M0 3.100h10V8.400H0z" fill="url(#fg)"/><rect x="1.700" y="4.600" width="2.900" height="2.300" rx=".5" fill="#4f5963"/><rect x="5.400" y="4.600" width="2.900" height="2.300" rx=".5" fill="#4f5963"/><rect x="2.500" y="5.300" width="1.300" height=".9" fill="#a7afb6"/><rect x="6.200" y="5.300" width="1.300" height=".9" fill="#a7afb6"/><rect x="3.800" y="5.400" width="2.400" height=".7" fill="#4f5963"/></svg><span class="c n" style="left:21px"><i style="transform:scaleX(1.000)">bin</i></span><span class="c" style="left:302.5px"><i style="transform:scaleX(0.955)">[LINK]</i></span><span class="c" style="left:339.8px"><i style="transform:scaleX(1.064)">root</i></span><span class="c" style="left:401.9px"><i style="transform:scaleX(0.985)">777</i></span><span class="c" style="left:436px"><i style="transform:scaleX(0.985)">14.07.2019 04:14...</i></span></div>
<div class="row" style="top:241.77px"><svg class="ic f" viewBox="0 0 9 11"><path d="M.9.500h4.900l2.700 2.700v7.300H.9z" fill="#fcfdfe" stroke="#70777e" stroke-width=".75"/><path d="M5.600.600v2.800h2.800z" fill="#555b61"/></svg><span class="c n" style="left:21px"><i style="transform:scaleX(1.012)">installNetwork_0</i></span><span class="c" style="left:267px"><i style="transform:scaleX(0.985)">log</i></span><span class="c" style="left:302.5px"><i style="transform:scaleX(0.985)">130 ...</i></span><span class="c" style="left:339.8px"><i style="transform:scaleX(1.064)">root</i></span><span class="c" style="left:401.9px"><i style="transform:scaleX(0.985)">644</i></span><span class="c" style="left:436px"><i style="transform:scaleX(0.985)">22.09.2019 12:19...</i></span></div>
<div class="row" style="top:259.88px"><svg class="ic f" viewBox="0 0 9 11"><path d="M.9.500h4.900l2.700 2.700v7.300H.9z" fill="#fcfdfe" stroke="#70777e" stroke-width=".75"/><path d="M5.600.600v2.800h2.800z" fill="#555b61"/></svg><span class="c n" style="left:21px"><i style="transform:scaleX(0.999)">install_0</i></span><span class="c" style="left:267px"><i style="transform:scaleX(0.985)">log</i></span><span class="c" style="left:302.5px"><i style="transform:scaleX(0.985)">22.5 ...</i></span><span class="c" style="left:339.8px"><i style="transform:scaleX(1.064)">root</i></span><span class="c" style="left:401.9px"><i style="transform:scaleX(0.985)">644</i></span><span class="c" style="left:436px"><i style="transform:scaleX(0.985)">22.09.2019 12:19...</i></span></div>
<div class="row" style="top:277.99px"><svg class="ic f" viewBox="0 0 9 11"><path d="M.9.500h4.900l2.700 2.700v7.300H.9z" fill="#fcfdfe" stroke="#70777e" stroke-width=".75"/><path d="M5.600.600v2.800h2.800z" fill="#555b61"/></svg><span class="c n" style="left:21px"><i style="transform:scaleX(0.996)">kernel_0</i></span><span class="c" style="left:267px"><i style="transform:scaleX(0.985)">log</i></span><span class="c" style="left:302.5px"><i style="transform:scaleX(0.985)">1.5 KB</i></span><span class="c" style="left:339.8px"><i style="transform:scaleX(1.064)">root</i></span><span class="c" style="left:401.9px"><i style="transform:scaleX(0.985)">644</i></span><span class="c" style="left:436px"><i style="transform:scaleX(0.985)">22.09.2019 12:21...</i></span></div>
<div class="row" style="top:296.10px"><svg class="ic" viewBox="0 0 10 8.400"><path d="M0 .5c0-.3.200-.5.500-.5h3.700l.8.900H9.500c.3 0 .5.200.5.500v1.700H0z" fill="#4a535c"/><path d="M0 3.100h10V8.400H0z" fill="url(#fg)"/><rect x="1.700" y="4.600" width="2.900" height="2.300" rx=".5" fill="#4f5963"/><rect x="5.400" y="4.600" width="2.900" height="2.300" rx=".5" fill="#4f5963"/><rect x="2.500" y="5.300" width="1.300" height=".9" fill="#a7afb6"/><rect x="6.200" y="5.300" width="1.300" height=".9" fill="#a7afb6"/><rect x="3.800" y="5.400" width="2.400" height=".7" fill="#4f5963"/></svg><span class="c n" style="left:21px"><i style="transform:scaleX(1.000)">lib</i></span><span class="c" style="left:302.5px"><i style="transform:scaleX(0.955)">[LINK]</i></span><span class="c" style="left:339.8px"><i style="transform:scaleX(1.064)">root</i></span><span class="c" style="left:401.9px"><i style="transform:scaleX(0.985)">777</i></span><span class="c" style="left:436px"><i style="transform:scaleX(0.985)">14.07.2019 04:14...</i></span></div>
<div class="row" style="top:314.21px"><svg class="ic" viewBox="0 0 10 8.400"><path d="M0 .5c0-.3.200-.5.500-.5h3.700l.8.900H9.500c.3 0 .5.200.5.500v1.700H0z" fill="#4a535c"/><path d="M0 3.100h10V8.400H0z" fill="url(#fg)"/><rect x="1.700" y="4.600" width="2.900" height="2.300" rx=".5" fill="#4f5963"/><rect x="5.400" y="4.600" width="2.900" height="2.300" rx=".5" fill="#4f5963"/><rect x="2.500" y="5.300" width="1.300" height=".9" fill="#a7afb6"/><rect x="6.200" y="5.300" width="1.300" height=".9" fill="#a7afb6"/><rect x="3.800" y="5.400" width="2.400" height=".7" fill="#4f5963"/></svg><span class="c n" style="left:21px"><i style="transform:scaleX(1.044)">lib64</i></span><span class="c" style="left:302.5px"><i style="transform:scaleX(0.955)">[LINK]</i></span><span class="c" style="left:339.8px"><i style="transform:scaleX(1.064)">root</i></span><span class="c" style="left:401.9px"><i style="transform:scaleX(0.985)">777</i></span><span class="c" style="left:436px"><i style="transform:scaleX(0.985)">14.07.2019 04:14...</i></span></div>
<div class="row" style="top:332.32px"><svg class="ic" viewBox="0 0 10 8.400"><path d="M0 .5c0-.3.200-.5.500-.5h3.700l.8.900H9.500c.3 0 .5.200.5.500v1.700H0z" fill="#4a535c"/><path d="M0 3.100h10V8.400H0z" fill="url(#fg)"/><rect x="1.700" y="4.600" width="2.900" height="2.300" rx=".5" fill="#4f5963"/><rect x="5.400" y="4.600" width="2.900" height="2.300" rx=".5" fill="#4f5963"/><rect x="2.500" y="5.300" width="1.300" height=".9" fill="#a7afb6"/><rect x="6.200" y="5.300" width="1.300" height=".9" fill="#a7afb6"/><rect x="3.800" y="5.400" width="2.400" height=".7" fill="#4f5963"/></svg><span class="c n" style="left:21px"><i style="transform:scaleX(1.000)">sbin</i></span><span class="c" style="left:302.5px"><i style="transform:scaleX(0.955)">[LINK]</i></span><span class="c" style="left:339.8px"><i style="transform:scaleX(1.064)">root</i></span><span class="c" style="left:401.9px"><i style="transform:scaleX(0.985)">777</i></span><span class="c" style="left:436px"><i style="transform:scaleX(0.985)">14.07.2019 04:14...</i></span></div>
  </div>
  <div class="sb" style="left:507.800px;width:10.700px"><div class="th" style="top:119px;height:222px"></div>
    <em class="car" style="position:absolute;left:3px;top:4px;border-top:none;border-bottom:3px solid #505050;margin:0;border-left-width:2.5px;border-right-width:2.5px"></em>
    <em class="car" style="position:absolute;left:3px;top:345px;margin:0;color:#a0a0a0"></em>
  </div>
  <div class="sbar">
    <span style="left:9.600px"><i>Size: 43.1 Kb, dirs: 19, files: 10</i></span>
    <span style="left:260px"><i style="transform:scaleX(1.030)">root@localhost</i></span>
    <div class="prog" style="left:319.800px;width:187.200px">0%</div>
  </div>
</div>

<div class="pnl" id="pr"><div class="lb"></div>
  <div class="pbar">
    <svg viewBox="0 0 10.400 10" style="position:absolute;left:5.800px;top:6.500px;width:10.400px;height:10px"><rect x="2.200" y=".8" width="1.200" height="2.500" fill="#3f6a94"/><path d="M1.500 5L5.200 1.600 8.900 5V9.500H1.500z" fill="#8fc6e2"/><path d="M0 5.300L5.200 .2l5.200 5.100-1 .3L5.200 3 1 5.600z" fill="#3f6a94"/><path d="M2 3.800L5.200 .9l3.200 2.900-.4 1.200H2.400z" fill="#4a78a3"/><circle cx="5.200" cy="3.200" r=".7" fill="#1f3f63"/><rect x="4" y="6.200" width="2.400" height="3.300" fill="#2d4660"/><rect x="4.500" y="6.700" width="1.400" height="1.100" fill="#cfe6f2"/><rect x=".9" y="9.200" width="8.600" height=".8" fill="#5fa3cf"/></svg>
    <span class="t" style="left:22px"><i>Home server</i><em class="car" style="margin-left:6px;color:#555"></em></span>
    <div class="sep"></div>
    <svg viewBox="0 0 10.400 9.200" style="position:absolute;left:93.3px;top:6.500px;width:10.400px;height:9.200px"><rect x="0" y="0" width="10.400" height="9.200" rx="1.600" fill="#23405f"/><rect x=".5" y="4.600" width="9.400" height="4.200" rx="1.200" fill="#1b3a5e"/><rect x="1.900" y="2.500" width="6.600" height="1.200" fill="#8aa3bb"/><rect x="1" y="5" width="8.400" height=".6" fill="#3f73a8"/><rect x="1.500" y="6.900" width="7.400" height="1" fill="#63b9a6"/><rect x="5.800" y="6.900" width="1.600" height="1" fill="#2f6f4f"/></svg><svg viewBox="0 0 10.400 9.400" style="position:absolute;left:118.1px;top:6.300px;width:10.400px;height:9.400px"><path d="M.2 7.200L1.700 5.300h7L10.200 7.200z" fill="#243a5a"/><path d="M5.100 0l3.700 3.700H6.900v3.200H3.300V3.700H1.400z" fill="#6ab82e"/><path d="M5.100 .9l2 2.200H3.100z" fill="#8fd04a"/><rect x=".2" y="6.900" width="10" height="2.500" rx=".4" fill="#5d93c4"/><rect x=".8" y="7.600" width="8.800" height=".6" fill="#8dbbe0"/></svg>
    <span class="t" style="left:140px">/root</span>
  </div>
  <div class="chdr">
    <span style="left:4px"><i>Name</i><em class="car" style="border-top:none;border-bottom:2.600px solid #555;margin-left:7px;margin-top:-2px"></em></span>
    <b style="left:261.500px"></b><span style="left:266.300px"><i>Type</i></span>
    <b style="left:295.400px"></b><span style="left:300.400px"><i>Size</i></span>
    <b style="left:333.100px"></b><span style="left:337.900px"><i>Owner</i></span>
    <b style="left:395.600px"></b><span style="left:400.200px"><i>Attrib...</i></span>
    <b style="left:429.200px"></b><span style="left:434.500px"><i>Modified</i></span>
  </div>
  <div class="list">
<div class="row" style="top:-0.25px"><svg class="ic" viewBox="0 0 10 8.400"><defs><linearGradient id="fg" x1="0" y1="0" x2="0" y2="1"><stop offset="0" stop-color="#c0c7cd"/><stop offset="1" stop-color="#929aa2"/></linearGradient></defs><path d="M0 .5c0-.3.200-.5.500-.5h3.700l.8.900H9.500c.3 0 .5.200.5.500v1.700H0z" fill="#4a535c"/><path d="M0 3.100h10V8.400H0z" fill="url(#fg)"/></svg><span class="c n" style="left:21.5px"><i style="transform:scaleX(1.000)">..</i></span><span class="c" style="left:302.9px"><i style="transform:scaleX(0.923)">[DIR]</i></span></div>
<div class="row" style="top:17.86px"><svg class="ic" viewBox="0 0 10 8.400"><defs><linearGradient id="fg" x1="0" y1="0" x2="0" y2="1"><stop offset="0" stop-color="#c0c7cd"/><stop offset="1" stop-color="#929aa2"/></linearGradient></defs><path d="M0 .5c0-.3.200-.5.500-.5h3.700l.8.900H9.500c.3 0 .5.200.5.500v1.700H0z" fill="#4a535c"/><path d="M0 3.100h10V8.400H0z" fill="url(#fg)"/></svg><span class="c n" style="left:21.5px"><i style="transform:scaleX(1.027)">.gem</i></span><span class="c" style="left:302.9px"><i style="transform:scaleX(0.923)">[DIR]</i></span><span class="c" style="left:340.4px"><i style="transform:scaleX(1.064)">root</i></span><span class="c" style="left:402.7px"><i style="transform:scaleX(0.985)">755</i></span><span class="c" style="left:436.8px"><i style="transform:scaleX(0.985)">22.09.2019 09:58...</i></span></div>
<div class="row" style="top:35.97px"><svg class="ic" viewBox="0 0 10 8.400"><defs><linearGradient id="fg" x1="0" y1="0" x2="0" y2="1"><stop offset="0" stop-color="#c0c7cd"/><stop offset="1" stop-color="#929aa2"/></linearGradient></defs><path d="M0 .5c0-.3.200-.5.500-.5h3.700l.8.900H9.500c.3 0 .5.200.5.500v1.700H0z" fill="#4a535c"/><path d="M0 3.100h10V8.400H0z" fill="url(#fg)"/></svg><span class="c n" style="left:21.5px"><i style="transform:scaleX(1.000)">.ssh</i></span><span class="c" style="left:302.9px"><i style="transform:scaleX(0.923)">[DIR]</i></span><span class="c" style="left:340.4px"><i style="transform:scaleX(1.064)">root</i></span><span class="c" style="left:402.7px"><i style="transform:scaleX(0.985)">700</i></span><span class="c" style="left:436.8px"><i style="transform:scaleX(0.985)">23.09.2019 10:15...</i></span></div>
<div class="row" style="top:54.08px"><svg class="ic" viewBox="0 0 10 8.400"><defs><linearGradient id="fg" x1="0" y1="0" x2="0" y2="1"><stop offset="0" stop-color="#c0c7cd"/><stop offset="1" stop-color="#929aa2"/></linearGradient></defs><path d="M0 .5c0-.3.200-.5.500-.5h3.700l.8.900H9.500c.3 0 .5.200.5.500v1.700H0z" fill="#4a535c"/><path d="M0 3.100h10V8.400H0z" fill="url(#fg)"/></svg><span class="c n" style="left:21.5px"><i style="transform:scaleX(0.898)">REPO.c</i></span><span class="c" style="left:302.9px"><i style="transform:scaleX(0.923)">[DIR]</i></span><span class="c" style="left:340.4px"><i style="transform:scaleX(1.064)">root</i></span><span class="c" style="left:402.7px"><i style="transform:scaleX(0.985)">755</i></span><span class="c" style="left:436.8px"><i style="transform:scaleX(0.985)">22.09.2019 09:51...</i></span></div>
<div class="row" style="top:72.19px"><svg class="ic f" viewBox="0 0 9 11"><path d="M.9.500h4.900l2.700 2.700v7.300H.9z" fill="#fcfdfe" stroke="#70777e" stroke-width=".75"/><path d="M5.600.600v2.800h2.800z" fill="#555b61"/></svg><span class="c n" style="left:21.5px"><i style="transform:scaleX(1.000)">.bash_history</i></span><span class="c" style="left:302.9px"><i style="transform:scaleX(0.985)">960 ...</i></span><span class="c" style="left:340.4px"><i style="transform:scaleX(1.064)">root</i></span><span class="c" style="left:402.7px"><i style="transform:scaleX(0.985)">600</i></span><span class="c" style="left:436.8px"><i style="transform:scaleX(0.985)">04.10.2019 14:25...</i></span></div>
<div class="row" style="top:90.30px"><svg class="ic f" viewBox="0 0 9 11"><path d="M.9.500h4.900l2.700 2.700v7.300H.9z" fill="#fcfdfe" stroke="#70777e" stroke-width=".75"/><path d="M5.600.600v2.800h2.800z" fill="#555b61"/></svg><span class="c n" style="left:21.5px"><i style="transform:scaleX(1.005)">.bash_logout</i></span><span class="c" style="left:302.9px"><i style="transform:scaleX(0.985)">18 by...</i></span><span class="c" style="left:340.4px"><i style="transform:scaleX(1.064)">root</i></span><span class="c" style="left:402.7px"><i style="transform:scaleX(0.985)">644</i></span><span class="c" style="left:436.8px"><i style="transform:scaleX(0.985)">29.12.2013 02:26...</i></span></div>
<div class="row" style="top:108.41px"><svg class="ic f" viewBox="0 0 9 11"><path d="M.9.500h4.900l2.700 2.700v7.300H.9z" fill="#fcfdfe" stroke="#70777e" stroke-width=".75"/><path d="M5.600.600v2.800h2.800z" fill="#555b61"/></svg><span class="c n" style="left:21.5px"><i style="transform:scaleX(1.005)">.bash_profile</i></span><span class="c" style="left:302.9px"><i style="transform:scaleX(0.985)">176 ...</i></span><span class="c" style="left:340.4px"><i style="transform:scaleX(1.064)">root</i></span><span class="c" style="left:402.7px"><i style="transform:scaleX(0.985)">644</i></span><span class="c" style="left:436.8px"><i style="transform:scaleX(0.985)">29.12.2013 02:26...</i></span></div>
<div class="row" style="top:126.52px"><svg class="ic f" viewBox="0 0 9 11"><path d="M.9.500h4.900l2.700 2.700v7.300H.9z" fill="#fcfdfe" stroke="#70777e" stroke-width=".75"/><path d="M5.600.600v2.800h2.800z" fill="#555b61"/></svg><span class="c n" style="left:21.5px"><i style="transform:scaleX(1.001)">.bashrc</i></span><span class="c" style="left:302.9px"><i style="transform:scaleX(0.985)">176 ...</i></span><span class="c" style="left:340.4px"><i style="transform:scaleX(1.064)">root</i></span><span class="c" style="left:402.7px"><i style="transform:scaleX(0.985)">644</i></span><span class="c" style="left:436.8px"><i style="transform:scaleX(0.985)">29.12.2013 02:26...</i></span></div>
<div class="row" style="top:144.63px"><svg class="ic f" viewBox="0 0 9 11"><path d="M.9.500h4.900l2.700 2.700v7.300H.9z" fill="#fcfdfe" stroke="#70777e" stroke-width=".75"/><path d="M5.600.600v2.800h2.800z" fill="#555b61"/></svg><span class="c n" style="left:21.5px"><i style="transform:scaleX(1.006)">.cloud-locale-test</i></span><span class="c" style="left:268.3px"><i style="transform:scaleX(0.985)">skip</i></span><span class="c" style="left:302.9px"><i style="transform:scaleX(0.985)">0 byt...</i></span><span class="c" style="left:340.4px"><i style="transform:scaleX(1.064)">root</i></span><span class="c" style="left:402.7px"><i style="transform:scaleX(0.985)">644</i></span><span class="c" style="left:436.8px"><i style="transform:scaleX(0.985)">14.07.2019 04:19...</i></span></div>
<div class="row" style="top:162.74px"><svg class="ic f" viewBox="0 0 9 11"><path d="M.9.500h4.900l2.700 2.700v7.300H.9z" fill="#fcfdfe" stroke="#70777e" stroke-width=".75"/><path d="M5.600.600v2.800h2.800z" fill="#555b61"/></svg><span class="c n" style="left:21.5px"><i style="transform:scaleX(1.000)">.cshrc</i></span><span class="c" style="left:302.9px"><i style="transform:scaleX(0.985)">100 ...</i></span><span class="c" style="left:340.4px"><i style="transform:scaleX(1.064)">root</i></span><span class="c" style="left:402.7px"><i style="transform:scaleX(0.985)">644</i></span><span class="c" style="left:436.8px"><i style="transform:scaleX(0.985)">29.12.2013 02:26...</i></span></div>
<div class="row" style="top:180.85px"><svg class="ic f" viewBox="0 0 9 11"><path d="M.9.500h4.900l2.700 2.700v7.300H.9z" fill="#fcfdfe" stroke="#70777e" stroke-width=".75"/><path d="M5.600.600v2.800h2.800z" fill="#555b61"/></svg><span class="c n" style="left:21.5px"><i style="transform:scaleX(1.000)">.rnd</i></span><span class="c" style="left:302.9px"><i style="transform:scaleX(0.985)">1 KB</i></span><span class="c" style="left:340.4px"><i style="transform:scaleX(1.064)">root</i></span><span class="c" style="left:402.7px"><i style="transform:scaleX(0.985)">600</i></span><span class="c" style="left:436.8px"><i style="transform:scaleX(0.985)">22.09.2019 12:18...</i></span></div>
<div class="row" style="top:198.96px"><svg class="ic f" viewBox="0 0 9 11"><path d="M.9.500h4.900l2.700 2.700v7.300H.9z" fill="#fcfdfe" stroke="#70777e" stroke-width=".75"/><path d="M5.600.600v2.800h2.800z" fill="#555b61"/></svg><span class="c n" style="left:21.5px"><i style="transform:scaleX(1.006)">.tcshrc</i></span><span class="c" style="left:302.9px"><i style="transform:scaleX(0.985)">129 ...</i></span><span class="c" style="left:340.4px"><i style="transform:scaleX(1.064)">root</i></span><span class="c" style="left:402.7px"><i style="transform:scaleX(0.985)">644</i></span><span class="c" style="left:436.8px"><i style="transform:scaleX(0.985)">29.12.2013 02:26...</i></span></div>
<div class="row" style="top:217.07px"><svg class="ic f" viewBox="0 0 9 11"><path d="M.9.500h4.900l2.700 2.700v7.300H.9z" fill="#fcfdfe" stroke="#70777e" stroke-width=".75"/><path d="M5.600.600v2.800h2.800z" fill="#555b61"/></svg><span class="c n" style="left:21.5px"><i style="transform:scaleX(1.000)">1</i></span><span class="c" style="left:302.9px"><i style="transform:scaleX(0.985)">0 byt...</i></span><span class="c" style="left:340.4px"><i style="transform:scaleX(1.064)">root</i></span><span class="c" style="left:402.7px"><i style="transform:scaleX(0.985)">644</i></span><span class="c" style="left:436.8px"><i style="transform:scaleX(0.985)">22.09.2019 11:51...</i></span></div>
<div class="row" style="top:235.18px"><svg class="ic f" viewBox="0 0 9 11"><path d="M.9.500h4.900l2.700 2.700v7.300H.9z" fill="#fcfdfe" stroke="#70777e" stroke-width=".75"/><path d="M5.600.600v2.800h2.800z" fill="#555b61"/></svg><span class="c n" style="left:21.5px"><i style="transform:scaleX(1.000)">10</i></span><span class="c" style="left:302.9px"><i style="transform:scaleX(0.985)">22 by...</i></span><span class="c" style="left:340.4px"><i style="transform:scaleX(1.064)">root</i></span><span class="c" style="left:402.7px"><i style="transform:scaleX(0.985)">644</i></span><span class="c" style="left:436.8px"><i style="transform:scaleX(0.985)">04.10.2019 13:11...</i></span></div>
<div class="row" style="top:253.29px"><svg class="ic f" viewBox="0 0 9 11"><path d="M.9.500h4.900l2.700 2.700v7.300H.9z" fill="#fcfdfe" stroke="#70777e" stroke-width=".75"/><path d="M5.600.600v2.800h2.800z" fill="#555b61"/></svg><span class="c n" style="left:21.5px"><i style="transform:scaleX(0.960)">_checkpkg</i></span><span class="c" style="left:268.3px"><i style="transform:scaleX(0.985)">sh</i></span><span class="c" style="left:302.9px"><i style="transform:scaleX(0.985)">14.6 ...</i></span><span class="c" style="left:340.4px"><i style="transform:scaleX(1.064)">root</i></span><span class="c" style="left:402.7px"><i style="transform:scaleX(0.985)">644</i></span><span class="c" style="left:436.8px"><i style="transform:scaleX(0.985)">19.09.2019 17:42...</i></span></div>
<div class="row" style="top:271.40px"><svg class="ic f" viewBox="0 0 9 11"><path d="M.9.500h4.900l2.700 2.700v7.300H.9z" fill="#fcfdfe" stroke="#70777e" stroke-width=".75"/><path d="M5.600.600v2.800h2.800z" fill="#555b61"/></svg><span class="c n" style="left:21.5px"><i style="transform:scaleX(0.924)">_checkpkg_LsV1</i></span><span class="c" style="left:268.3px"><i style="transform:scaleX(0.985)">sh</i></span><span class="c" style="left:302.9px"><i style="transform:scaleX(0.985)">6.9 KB</i></span><span class="c" style="left:340.4px"><i style="transform:scaleX(1.064)">root</i></span><span class="c" style="left:402.7px"><i style="transform:scaleX(0.985)">644</i></span><span class="c" style="left:436.8px"><i style="transform:scaleX(0.985)">19.09.2019 17:57...</i></span></div>
<div class="row" style="top:289.51px"><svg class="ic f" viewBox="0 0 9 11"><path d="M.9.500h4.900l2.700 2.700v7.300H.9z" fill="#fcfdfe" stroke="#70777e" stroke-width=".75"/><path d="M5.600.600v2.800h2.800z" fill="#555b61"/></svg><span class="c n" style="left:21.5px"><i style="transform:scaleX(0.963)">_installCentos_01</i></span><span class="c" style="left:268.3px"><i style="transform:scaleX(0.985)">sh</i></span><span class="c" style="left:302.9px"><i style="transform:scaleX(0.985)">42.6 ...</i></span><span class="c" style="left:340.4px"><i style="transform:scaleX(1.064)">root</i></span><span class="c" style="left:402.7px"><i style="transform:scaleX(0.985)">644</i></span><span class="c" style="left:436.8px"><i style="transform:scaleX(0.985)">17.09.2019 14:58...</i></span></div>
<div class="row" style="top:307.62px"><svg class="ic f" viewBox="0 0 9 11"><path d="M.9.500h4.900l2.700 2.700v7.300H.9z" fill="#fcfdfe" stroke="#70777e" stroke-width=".75"/><path d="M5.600.600v2.800h2.800z" fill="#555b61"/></svg><span class="c n" style="left:21.5px"><i style="transform:scaleX(0.918)">anaconda-ks</i></span><span class="c" style="left:268.3px"><i style="transform:scaleX(0.985)">cfg</i></span><span class="c" style="left:302.9px"><i style="transform:scaleX(0.985)">2.7 KB</i></span><span class="c" style="left:340.4px"><i style="transform:scaleX(1.064)">root</i></span><span class="c" style="left:402.7px"><i style="transform:scaleX(0.985)">600</i></span><span class="c" style="left:436.8px"><i style="transform:scaleX(0.985)">14.07.2019 04:18...</i></span></div>
<div class="row" style="top:325.73px"><svg class="ic f" viewBox="0 0 9 11"><path d="M.9.500h4.900l2.700 2.700v7.300H.9z" fill="#fcfdfe" stroke="#70777e" stroke-width=".75"/><path d="M5.600.600v2.800h2.800z" fill="#555b61"/></svg><span class="c n" style="left:21.5px"><i style="transform:scaleX(1.021)">conf_error</i></span><span class="c" style="left:268.3px"><i style="transform:scaleX(0.985)">log</i></span><span class="c" style="left:302.9px"><i style="transform:scaleX(0.985)">260 ...</i></span><span class="c" style="left:340.4px"><i style="transform:scaleX(1.064)">root</i></span><span class="c" style="left:402.7px"><i style="transform:scaleX(0.985)">644</i></span><span class="c" style="left:436.8px"><i style="transform:scaleX(0.985)">22.09.2019 11:51...</i></span></div>
<div class="row" style="top:343.84px"><svg class="ic f" viewBox="0 0 9 11"><path d="M.9.500h4.900l2.700 2.700v7.300H.9z" fill="#fcfdfe" stroke="#70777e" stroke-width=".75"/><path d="M5.600.600v2.800h2.800z" fill="#555b61"/></svg><span class="c n" style="left:21.5px"><i style="transform:scaleX(1.000)">install</i></span><span class="c" style="left:268.3px"><i style="transform:scaleX(0.985)">sh</i></span><span class="c" style="left:302.9px"><i style="transform:scaleX(0.985)">5.9 KB</i></span><span class="c" style="left:340.4px"><i style="transform:scaleX(1.064)">root</i></span><span class="c" style="left:402.7px"><i style="transform:scaleX(0.985)">644</i></span><span class="c" style="left:436.8px"><i style="transform:scaleX(0.985)">22.09.2019 10:00...</i></span></div>
  </div>
  <div class="sb" style="left:507.200px;width:11.900px;background:#f3f6f9"><div class="th" style="top:10.500px;height:278px"></div>
    <em class="car" style="position:absolute;left:3px;top:3px;border-top:none;border-bottom:3px solid #a0a0a0;margin:0"></em>
    <em class="car" style="position:absolute;left:3px;top:345px;margin:0;color:#505050"></em>
  </div>
  <div class="sbar">
    <span style="left:9.900px"><i>Size: 236.5 Kb, dirs: 3, files: 19</i></span>
    <span style="left:260.600px"><i style="transform:scaleX(1.030)">root@localhost</i></span>
    <div class="prog" style="left:320.900px;width:186.100px">0%</div>
  </div>
</div>

<div id="bbar">
  <span class="dis" style="left:0"><i>View [ Ctrl + 3 ]</i></span>
  <span class="dis" style="left:148.4px"><i>Edit [ Ctrl + 4 ]</i></span>
  <span style="left:296.8px"><i>Copy [ Ctrl + 5 ]</i></span>
  <span style="left:445.2px"><i>Move [ Shift + 5 ]</i></span>
  <span style="left:593.6px"><i>Rename [ Ctrl + 6 ]</i></span>
  <span style="left:742px"><i>New Folder [ Ctrl + 7 ]</i></span>
  <span style="left:890.4px;border-right:none"><i>Remove [ Ctrl + 8 ]</i></span>
</div>
<div id="pscroll"></div>
</div>
</body>
</html>
